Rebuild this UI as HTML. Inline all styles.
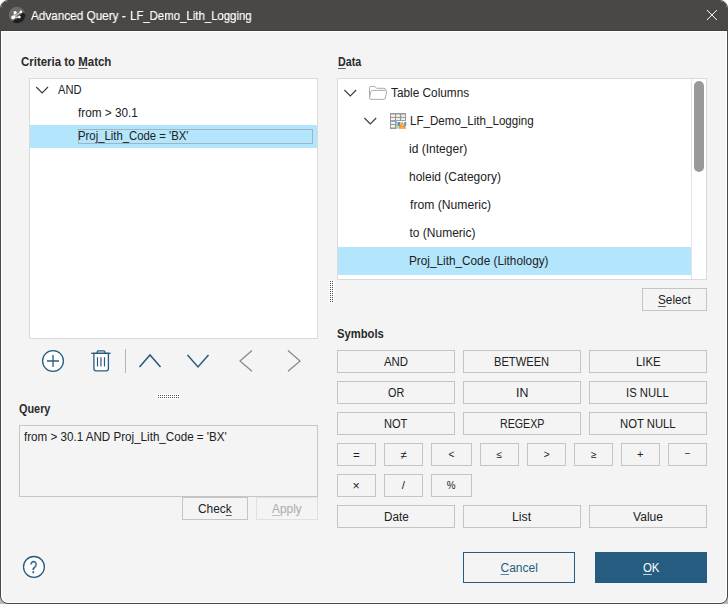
<!DOCTYPE html>
<html lang="en">
<head>
<meta charset="utf-8">
<title>Advanced Query - LF_Demo_Lith_Logging</title>
<style>
html,body{margin:0;padding:0;}
body{width:728px;height:604px;overflow:hidden;position:relative;
  background:linear-gradient(#ffffff 0,#ffffff 300px,#b9b9b9 300px,#b9b9b9 100%);
  font-family:"Liberation Sans",sans-serif;font-size:12px;color:#212121;}
#win{position:absolute;left:0;top:0;width:728px;height:604px;box-sizing:border-box;border:1px solid #4a4846;border-radius:8px;background:#fff;overflow:hidden;}
#pg{position:absolute;left:-1px;top:-1px;width:728px;height:604px;}
#tb{position:absolute;left:0;top:0;width:728px;height:31px;background:#4a4846;border-bottom:0;}
#tbl{position:absolute;left:0;top:30px;width:728px;height:1px;background:#413f3d;}
#ct{position:absolute;left:2px;top:32px;width:724px;height:570px;background:#f4f4f4;border-radius:0 0 6px 6px;}
.t{position:absolute;white-space:nowrap;line-height:16px;height:16px;transform-origin:0 0;}
.box{position:absolute;box-sizing:border-box;border:1px solid #dadada;background:#fff;}
.btn{position:absolute;box-sizing:border-box;border:1px solid #c4c4c4;background:#f4f4f4;height:23px;}
.sel{position:absolute;background:#b3e5fc;}
u{text-decoration:underline;text-decoration-thickness:1px;text-underline-offset:1.5px;text-decoration-color:color-mix(in srgb,currentColor 72%,transparent);}
svg{position:absolute;left:0;top:0;overflow:visible;}
</style>
</head>
<body>
<div id="win"><div id="pg">
<div id="tb"></div><div id="tbl"></div>
<div id="ct"></div>

<!-- criteria tree -->
<div class="box" style="left:29px;top:78px;width:289px;height:261px;"></div>
<div class="sel" style="left:30px;top:125px;width:287px;height:23px;"></div>
<div style="position:absolute;box-sizing:border-box;left:78px;top:129px;width:235px;height:15px;border:1px solid #9fb4bf;"></div>

<!-- toolbar separator -->
<div style="position:absolute;left:125px;top:349px;width:1px;height:24px;background:#b5b5b5;"></div>

<!-- splitter handles -->
<div style="position:absolute;left:157px;top:394px;width:23px;height:5px;background:#fff;"></div>
<div style="position:absolute;left:158px;top:395px;width:21px;height:1px;background:repeating-linear-gradient(90deg,#4d4d4d 0,#4d4d4d 1px,transparent 1px,transparent 2px);"></div>
<div style="position:absolute;left:158px;top:397px;width:21px;height:1px;background:repeating-linear-gradient(90deg,#4d4d4d 0,#4d4d4d 1px,transparent 1px,transparent 2px);"></div>
<div style="position:absolute;left:329px;top:280px;width:5px;height:23px;background:#fff;"></div>
<div style="position:absolute;left:330px;top:281px;width:1px;height:21px;background:repeating-linear-gradient(180deg,#4d4d4d 0,#4d4d4d 1px,transparent 1px,transparent 2px);"></div>
<div style="position:absolute;left:332px;top:281px;width:1px;height:21px;background:repeating-linear-gradient(180deg,#4d4d4d 0,#4d4d4d 1px,transparent 1px,transparent 2px);"></div>

<!-- query -->
<div class="box" style="left:19px;top:425px;width:299px;height:72px;background:#f4f4f4;border-color:#c6c6c6;"></div>
<div class="btn" style="left:182px;top:497px;width:66px;"></div>
<div class="btn" style="left:256px;top:497px;width:62px;border-color:#e0e0e0;"></div>

<!-- data tree -->
<div class="box" style="left:337px;top:78px;width:370px;height:202px;"></div>
<div style="position:absolute;left:691px;top:79px;width:1px;height:200px;background:#e4e4e4;"></div>
<div class="sel" style="left:338px;top:247px;width:353px;height:28px;"></div>
<div style="position:absolute;left:694px;top:81px;width:10px;height:91px;border-radius:5px;background:#999;"></div>
<div class="btn" style="left:642px;top:288px;width:65px;"></div>

<!-- symbol buttons -->
<div class="btn" style="left:337px;top:350px;width:118px;"></div>
<div class="btn" style="left:463px;top:350px;width:118px;"></div>
<div class="btn" style="left:589px;top:350px;width:118px;"></div>
<div class="btn" style="left:337px;top:381px;width:118px;"></div>
<div class="btn" style="left:463px;top:381px;width:118px;"></div>
<div class="btn" style="left:589px;top:381px;width:118px;"></div>
<div class="btn" style="left:337px;top:412px;width:118px;"></div>
<div class="btn" style="left:463px;top:412px;width:118px;"></div>
<div class="btn" style="left:589px;top:412px;width:118px;"></div>
<div class="btn" style="left:337px;top:443px;width:39px;"></div>
<div class="btn" style="left:384px;top:443px;width:39px;"></div>
<div class="btn" style="left:431px;top:443px;width:41px;"></div>
<div class="btn" style="left:480px;top:443px;width:39px;"></div>
<div class="btn" style="left:527px;top:443px;width:39px;"></div>
<div class="btn" style="left:574px;top:443px;width:39px;"></div>
<div class="btn" style="left:621px;top:443px;width:39px;"></div>
<div class="btn" style="left:668px;top:443px;width:39px;"></div>
<div class="btn" style="left:337px;top:474px;width:39px;"></div>
<div class="btn" style="left:384px;top:474px;width:39px;"></div>
<div class="btn" style="left:431px;top:474px;width:41px;"></div>
<div class="btn" style="left:337px;top:505px;width:118px;"></div>
<div class="btn" style="left:463px;top:505px;width:118px;"></div>
<div class="btn" style="left:589px;top:505px;width:118px;"></div>

<!-- bottom buttons -->
<div class="btn" style="left:463px;top:552px;width:112px;height:31px;border-color:#265c7f;background:#f4f4f4;"></div>
<div class="btn" style="left:595px;top:552px;width:112px;height:31px;border-color:#265c7f;background:#265c7f;"></div>

<!-- icons, drawn in page coordinates -->
<svg width="728" height="604" viewBox="0 0 728 604">
  <!-- app icon -->
  <circle cx="17" cy="15" r="8.2" fill="#6b6a69"/>
  <path d="M25.1 13.7 A8.2 8.2 0 0 1 12.3 21.7 L14.6 19.5 Q16.4 19.6 17.6 18.4 L20.9 14.3 L22.7 12.6 Z" fill="#1e1f23"/>
  <path d="M13.3 17.3 L20.9 11.9 M13.3 17.3 L15.1 12.7 M13.3 17.3 L19.3 17.1" stroke="#fff" stroke-width="0.9" fill="none"/>
  <circle cx="13.1" cy="17.4" r="1.9" fill="#fff"/>
  <circle cx="15.1" cy="12.6" r="1.6" fill="#fff"/>
  <circle cx="20.9" cy="11.9" r="1.3" fill="#fff"/>
  <circle cx="19.4" cy="17.1" r="1.3" fill="#fff"/>
  <!-- close -->
  <path d="M706.9 10 L716.9 20 M716.9 10 L706.9 20" stroke="#fff" stroke-width="1" fill="none"/>

  <!-- tree chevrons -->
  <g stroke="#3a3a3a" stroke-width="1.1" fill="none">
    <path d="M36.2 87 L42.1 93 L48 87"/>
    <path d="M344.4 90 L350.3 96 L356.2 90"/>
    <path d="M364.4 118 L370.3 124 L376.2 118"/>
  </g>

  <!-- toolbar icons -->
  <g stroke="#265c7f" fill="none">
    <circle cx="53" cy="361" r="10.4" stroke-width="1.3" fill="#fff"/>
    <path d="M47 361 H59 M53 355 V367" stroke-width="1.3"/>
    <path d="M97.2 353.3 V352 Q97.2 350.8 98.4 350.8 H103.7 Q104.9 350.8 104.9 352 V353.3" stroke-width="1.3"/>
    <path d="M93.9 353.3 V368.6 Q93.9 370.8 96.1 370.8 H106.2 Q108.4 370.8 108.4 368.6 V353.3 Z" stroke-width="1.3" fill="#fff"/>
    <path d="M91.2 353.3 H110.6" stroke-width="1.3"/>
    <path d="M97.5 357.2 V366.6 M100.95 357.2 V366.6 M104.5 357.2 V366.6" stroke-width="1.2"/>
    <path d="M139.5 366.9 L150 354.9 L160.5 366.9" stroke-width="1.5"/>
    <path d="M187.5 354.9 L198 366.9 L208.5 354.9" stroke-width="1.5"/>
  </g>
  <g stroke="#8b8b8b" stroke-width="1.3" fill="none">
    <path d="M252 350.6 L240 360.9 L252 371.2"/>
    <path d="M288 350.6 L300 360.9 L288 371.2"/>
  </g>

  <!-- folder -->
  <g stroke="#a3a3a3" stroke-width="0.9" fill="none">
    <path d="M369.5 97 V87.4 Q369.5 86.4 370.5 86.4 H374.8 L376.6 88.3 H384 Q385.4 88.3 385.8 90.2"/>
    <path d="M372.6 90.4 H385.6 Q387 90.4 386.7 91.8 L385.3 98 Q385 99.4 383.6 99.4 H371 Q369.3 99.4 369.6 97.8 L370.8 91.8 Q371.1 90.4 372.6 90.4 Z" fill="#fff"/>
  </g>
  <!-- table icon -->
  <rect x="390" y="113" width="16" height="16" fill="#979797"/>
  <g fill="#f2f2f2">
    <rect x="391" y="114.5" width="4" height="2.4"/><rect x="396.1" y="114.5" width="3.8" height="2.4"/><rect x="401.2" y="114.5" width="3.8" height="2.4"/>
    <rect x="391" y="117.9" width="4" height="2.2"/><rect x="396.1" y="117.9" width="3.8" height="2.2"/><rect x="401.2" y="117.9" width="3.8" height="2.2"/>
    <rect x="391" y="121.8" width="4" height="2.2"/>
    <rect x="391" y="125" width="4" height="2.5"/>
  </g>
  <rect x="396.6" y="121" width="10" height="8.2" fill="#fff"/>
  <rect x="397.4" y="122" width="3" height="4.4" fill="#4f97cf"/>
  <rect x="404.2" y="122" width="2" height="4.4" fill="#4f97cf"/>
  <rect x="397" y="126.2" width="1.6" height="2" fill="#d9d94a"/>
  <path d="M402.1 121.2 L406.2 128.8 H398.2 Z" fill="#f5952b"/>
  <path d="M402.1 123.8 V126.3 M402.1 127 V127.9" stroke="#ffd9a8" stroke-width="0.9"/>

  <!-- help -->
  <circle cx="33.95" cy="566.9" r="10.4" stroke="#265c7f" stroke-width="1.3" fill="#fff"/>
</svg>

<span class="t" id="title" style="left:31.22px;top:7.70px;transform:scaleX(0.9488);color:#fff;font-size:12.4px;-webkit-text-stroke:0.2px #fff;will-change:transform;">Advanced Query -</span>
<span class="t" id="title2" style="left:129.96px;top:7.70px;transform:scaleX(0.9200);color:#fff;font-size:12.4px;-webkit-text-stroke:0.2px #fff;will-change:transform;">LF_Demo_Lith_Logging</span>
<span class="t" id="crit" style="left:21.08px;top:54.00px;transform:scaleX(0.9540);font-weight:bold;color:#2a2a2a;">Criteria to <u>M</u>atch</span>
<span class="t" id="and0" style="left:58.29px;top:82.00px;transform:scaleX(0.9307);">AND</span>
<span class="t" id="from0" style="left:78.26px;top:105.00px;transform:scaleX(0.9816);">from &gt; 30.1</span>
<span class="t" id="proj0" style="left:78.03px;top:128.00px;transform:scaleX(0.9442);">Proj_Lith_Code = 'BX'</span>
<span class="t" id="query" style="left:19.09px;top:401.00px;transform:scaleX(0.9053);font-weight:bold;color:#2a2a2a;">Query</span>
<span class="t" id="qtext" style="left:23.91px;top:429.00px;transform:scaleX(0.9686);">from &gt; 30.1 AND Proj_Lith_Code = 'BX'</span>
<span class="t" id="check" style="left:197.78px;top:501.00px;transform:scaleX(0.9902);">Chec<u>k</u></span>
<span class="t" id="apply" style="left:272.07px;top:501.00px;transform:scaleX(0.9914);color:#ababab;"><u>A</u>pply</span>
<span class="t" id="data" style="left:337.86px;top:54.00px;transform:scaleX(0.8905);font-weight:bold;color:#2a2a2a;"><u>D</u>ata</span>
<span class="t" id="tcol" style="left:390.50px;top:85.00px;transform:scaleX(0.9846);">Table Columns</span>
<span class="t" id="lfd" style="left:410.14px;top:113.00px;transform:scaleX(0.9655);">LF_Demo_Lith_Logging</span>
<span class="t" id="id" style="left:409.03px;top:141.00px;transform:scaleX(1.0037);">id (Integer)</span>
<span class="t" id="holeid" style="left:409.01px;top:169.00px;transform:scaleX(0.9981);">holeid (Category)</span>
<span class="t" id="fromn" style="left:409.76px;top:197.00px;transform:scaleX(1.0138);">from (Numeric)</span>
<span class="t" id="ton" style="left:409.50px;top:225.00px;transform:scaleX(1.0000);">to (Numeric)</span>
<span class="t" id="projl" style="left:409.01px;top:253.00px;transform:scaleX(0.9818);">Proj_Lith_Code (Lithology)</span>
<span class="t" id="select" style="left:658.00px;top:292.00px;transform:scaleX(0.9816);"><u>S</u>elect</span>
<span class="t" id="symbols" style="left:336.88px;top:326.00px;transform:scaleX(0.9362);font-weight:bold;color:#2a2a2a;">Symbols</span>
<span class="t" id="b_and" style="left:384.00px;top:354.00px;transform:scaleX(0.9508);">AND</span>
<span class="t" id="b_btw" style="left:494.34px;top:354.00px;transform:scaleX(0.9287);">BETWEEN</span>
<span class="t" id="b_like" style="left:635.69px;top:354.00px;transform:scaleX(0.9481);">LIKE</span>
<span class="t" id="b_or" style="left:387.99px;top:385.00px;transform:scaleX(0.8999);">OR</span>
<span class="t" id="b_in" style="left:515.51px;top:385.00px;transform:scaleX(1.0307);">IN</span>
<span class="t" id="b_isn" style="left:626.07px;top:385.00px;transform:scaleX(0.9433);">IS NULL</span>
<span class="t" id="b_not" style="left:383.97px;top:416.00px;transform:scaleX(0.9233);">NOT</span>
<span class="t" id="b_rgx" style="left:500.17px;top:416.00px;transform:scaleX(0.8883);">REGEXP</span>
<span class="t" id="b_nn" style="left:619.51px;top:416.00px;transform:scaleX(0.9412);">NOT NULL</span>
<span class="t" id="b_date" style="left:384.11px;top:509.00px;transform:scaleX(0.9758);">Date</span>
<span class="t" id="b_list" style="left:511.55px;top:509.00px;transform:scaleX(1.0286);">List</span>
<span class="t" id="b_val" style="left:633.04px;top:509.00px;transform:scaleX(1.0087);">Value</span>
<span class="t" id="cancel" style="left:500.50px;top:560.00px;transform:scaleX(1.0000);color:#265c7f;"><u>C</u>ancel</span>
<span class="t" id="ok" style="left:643.01px;top:560.00px;transform:scaleX(0.9492);color:#fff;"><u>O</u>K</span>
<span class="t" id="g_eq" style="left:353.03px;top:447.00px;font-size:11.5px;">=</span>
<span class="t" id="g_ne" style="left:400.39px;top:446.50px;font-size:11.5px;">≠</span>
<span class="t" id="g_lt" style="left:448.51px;top:447.10px;font-size:10px;">&lt;</span>
<span class="t" id="g_le" style="left:496.48px;top:447.36px;font-size:10px;">≤</span>
<span class="t" id="g_gt" style="left:543.69px;top:446.50px;font-size:10px;">&gt;</span>
<span class="t" id="g_ge" style="left:590.89px;top:447.12px;font-size:10px;">≥</span>
<span class="t" id="g_pl" style="left:636.89px;top:446.10px;font-size:11px;">+</span>
<span class="t" id="g_mi" style="left:684.69px;top:446.00px;font-size:10px;">−</span>
<span class="t" id="g_mul" style="left:352.40px;top:477.90px;font-size:12.5px;">×</span>
<span class="t" id="g_div" style="left:401.65px;top:477.20px;font-size:11.5px;">/</span>
<span class="t" id="g_pct" style="left:446.21px;top:477.08px;font-size:11.5px;transform:scaleX(0.86);transform-origin:50% 50%;">%</span>
<span class="t" id="g_q" style="left:29.30px;top:560.40px;font-size:16px;-webkit-text-stroke:0.3px #265c7f;color:#265c7f;transform:scaleX(0.82);transform-origin:50% 50%;will-change:transform;">?</span>
</div></div>
</body>
</html>
